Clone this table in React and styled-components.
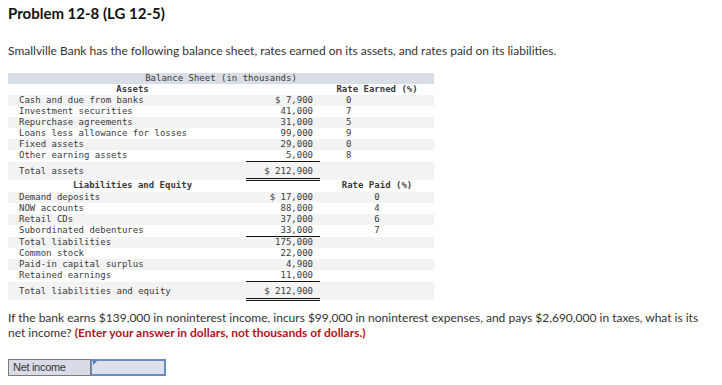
import React from "react";
import styled, { createGlobalStyle } from "styled-components";

const Global = createGlobalStyle`
  body {
    margin: 0;
    padding: 4px 8px;
    background: #fff;
    font-family: Lato, "Open Sans", sans-serif;
    color: #222;
  }
`;

const Title = styled.h2`
  margin: 0;
  font-size: 15px;
  line-height: 18px;
  font-weight: 700;
  color: #111;
`;

const Intro = styled.p`
  margin: 22px 0 0;
  font-size: 12px;
  line-height: 14px;
  color: #333;
`;

const Sheet = styled.table`
  margin-top: 15px;
  width: 426px;
  border-collapse: collapse;
  table-layout: fixed;
  font-family: "DejaVu Sans Mono", "Liberation Mono", monospace;
  font-size: 9px;
  color: #3a3a3a;
`;

const Caption = styled.th`
  background: #d9dde6;
  height: 11px;
  padding: 0;
  font-weight: 400;
  text-align: center;
  line-height: 11px;
`;

const Row = styled.tr`
  background: ${(p) => (p.$shade ? "#f3f3f3" : "#fff")};
`;

const Cell = styled.td`
  padding: 0;
  padding-top: ${(p) => (p.$tall ? "2px" : "0")};
  height: ${(p) => (p.$tall ? "14px" : "11px")};
  line-height: 11px;
  vertical-align: middle;
  white-space: nowrap;
`;

const Label = styled(Cell)`
  padding-left: 11px;
  font-weight: ${(p) => (p.$head ? 700 : 400)};
  text-align: ${(p) => (p.$head ? "center" : "left")};
`;

const Amount = styled(Cell)`
  text-align: right;
  padding-right: 7px;
  border-bottom: ${(p) =>
    p.$rule === "double" ? "3px double #111" : p.$rule === "single" ? "1px solid #111" : "none"};
`;

const Rate = styled(Cell)`
  text-align: ${(p) => (p.$center ? "center" : "left")};
  padding-left: ${(p) => (p.$center ? "0" : "26px")};
  font-weight: ${(p) => (p.$head ? 700 : 400)};
`;

const Question = styled.p`
  margin: 9px 0 0;
  font-size: 12px;
  line-height: 15px;
  color: #333;
`;

const Hint = styled.strong`
  color: #b3121c;
`;

const Answer = styled.div`
  display: flex;
  margin-top: 19px;
  height: 17px;
  font-family: "Liberation Sans", Arial, sans-serif;
`;

const AnswerLabel = styled.div`
  width: 83px;
  box-sizing: border-box;
  border: 1px solid #7a7a7a;
  background: #d9dce6;
  padding-left: 4px;
  font-size: 11px;
  line-height: 15px;
  color: #333;
  letter-spacing: -0.3px;
`;

const AnswerInput = styled.div`
  position: relative;
  width: 75px;
  box-sizing: border-box;
  border: 2px solid #6a8cc4;
  border-left-width: 1px;
  background: #dce0ea;
  &::before {
    content: "";
    position: absolute;
    left: 1px;
    top: 0;
    border-top: 4px solid #4a78c2;
    border-right: 4px solid transparent;
  }
`;

const assets = [
  ["Cash and due from banks", "$ 7,900", "0"],
  ["Investment securities", "41,000", "7"],
  ["Repurchase agreements", "31,000", "5"],
  ["Loans less allowance for losses", "99,000", "9"],
  ["Fixed assets", "29,000", "0"],
  ["Other earning assets", "5,000", "8", "single"],
];

const liabilities = [
  ["Demand deposits", "$ 17,000", "0"],
  ["NOW accounts", "88,000", "4"],
  ["Retail CDs", "37,000", "6"],
  ["Subordinated debentures", "33,000", "7", "single"],
  ["Total liabilities", "175,000", ""],
  ["Common stock", "22,000", ""],
  ["Paid-in capital surplus", "4,900", ""],
  ["Retained earnings", "11,000", "", "single"],
];

export default function App() {
  return (
    <>
      <Global />
      <Title>Problem 12-8 (LG 12-5)</Title>
      <Intro>
        Smallville Bank has the following balance sheet, rates earned on its assets, and rates paid on its
        liabilities.
      </Intro>
      <Sheet>
        <colgroup>
          <col style={{ width: 238 }} />
          <col style={{ width: 74 }} />
          <col style={{ width: 114 }} />
        </colgroup>
        <thead>
          <tr>
            <Caption colSpan={3}>Balance Sheet (in thousands)</Caption>
          </tr>
        </thead>
        <tbody>
          <Row>
            <Label $head>Assets</Label>
            <Amount />
            <Rate $head $center>Rate Earned (%)</Rate>
          </Row>
          {assets.map(([name, value, rate, rule], i) => (
            <Row key={name} $shade={i % 2 === 0}>
              <Label>{name}</Label>
              <Amount $rule={rule}>{value}</Amount>
              <Rate>{rate}</Rate>
            </Row>
          ))}
          <Row $shade>
            <Label $tall>Total assets</Label>
            <Amount $tall $rule="double">$ 212,900</Amount>
            <Rate $tall />
          </Row>
          <Row>
            <Label $head>Liabilities and Equity</Label>
            <Amount />
            <Rate $head $center>Rate Paid (%)</Rate>
          </Row>
          {liabilities.map(([name, value, rate, rule], i) => (
            <Row key={name} $shade={i % 2 === 0}>
              <Label>{name}</Label>
              <Amount $rule={rule}>{value}</Amount>
              <Rate $center>{rate}</Rate>
            </Row>
          ))}
          <Row $shade>
            <Label $tall>Total liabilities and equity</Label>
            <Amount $tall $rule="double">$ 212,900</Amount>
            <Rate $tall />
          </Row>
        </tbody>
      </Sheet>
      <Question>
        If the bank earns $139,000 in noninterest income, incurs $99,000 in noninterest expenses, and pays
        $2,690,000 in taxes, what is its net income?{" "}
        <Hint>(Enter your answer in dollars, not thousands of dollars.)</Hint>
      </Question>
      <Answer>
        <AnswerLabel>Net income</AnswerLabel>
        <AnswerInput />
      </Answer>
    </>
  );
}
